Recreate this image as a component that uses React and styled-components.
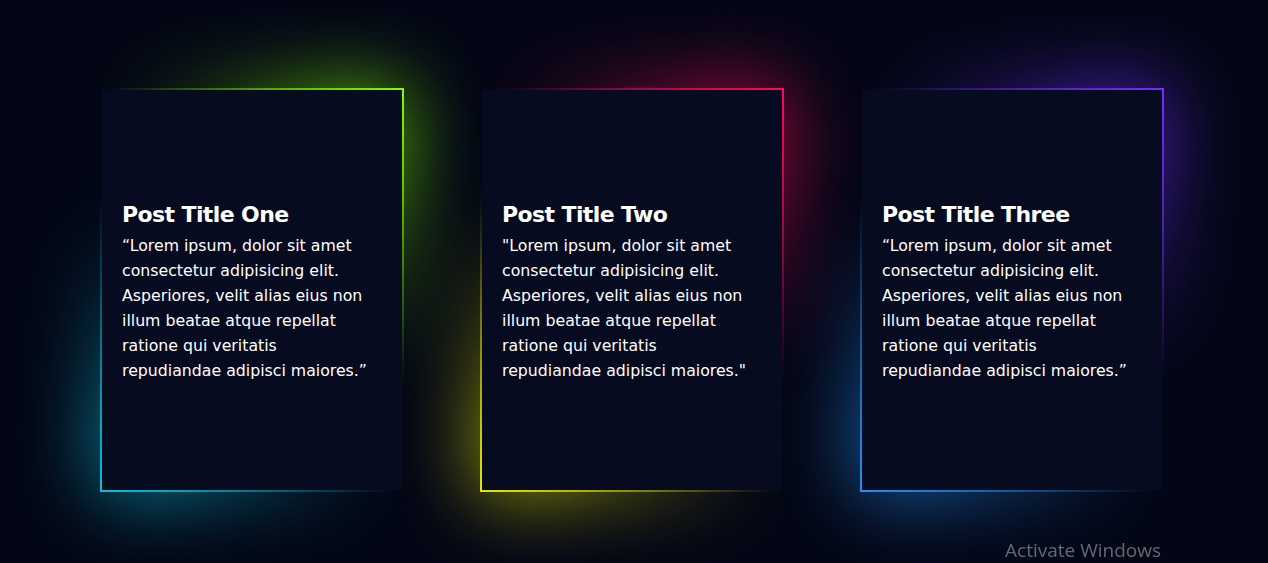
import React from "react";
import styled, { createGlobalStyle } from "styled-components";

const GlobalStyle = createGlobalStyle`
  * {
    box-sizing: border-box;
  }

  html,
  body {
    margin: 0;
    padding: 0;
    background: #030615;
    min-height: 100%;
    overflow: hidden;
  }
`;

const Page = styled.main`
  display: flex;
  justify-content: center;
  gap: 80px;
  padding: 90px 4px 0 0;
  min-height: 563px;
  background: #030615;
  font-family: "DejaVu Sans", "Open Sans", sans-serif;
`;

const Card = styled.div`
  position: relative;
  isolation: isolate;
  width: 300px;
  height: 400px;

  &::before,
  &::after {
    content: "";
    position: absolute;
    inset: -2px;
    background: linear-gradient(
      45deg,
      ${(p) => p.$from} 0%,
      transparent 42%,
      transparent 58%,
      ${(p) => p.$to} 100%
    );
  }

  &::before {
    z-index: -1;
  }

  &::after {
    z-index: -2;
    filter: blur(40px);
    opacity: 0.95;
  }
`;

const Panel = styled.div`
  display: flex;
  flex-direction: column;
  justify-content: center;
  height: 100%;
  padding: 2px 20px 0;
  background: #070b20;
  color: #fff;
`;

const Title = styled.h2`
  margin: 0 0 3px;
  font-size: 22px;
  font-weight: 700;
  line-height: 30px;
  letter-spacing: -0.6px;
`;

const Body = styled.p`
  margin: 0;
  font-size: 15.75px;
  font-weight: 400;
  line-height: 25px;
  white-space: pre-line;
`;

const Watermark = styled.div`
  position: fixed;
  right: 107px;
  bottom: 0;
  font-family: "Open Sans", "Noto Sans", sans-serif;
  font-size: 19px;
  color: rgba(200, 200, 200, 0.5);
`;

const text = (open, close) =>
  `${open}Lorem ipsum, dolor sit amet
consectetur adipisicing elit.
Asperiores, velit alias eius non
illum beatae atque repellat
ratione qui veritatis
repudiandae adipisci maiores.${close}`;

const posts = [
  { title: "Post Title One", from: "#0cc0d9", to: "#80ff00", open: "\u201C", close: "\u201D" },
  { title: "Post Title Two", from: "#e8e800", to: "#ff0a5a", open: '"', close: '"' },
  { title: "Post Title Three", from: "#2391f5", to: "#7030ff", open: "\u201C", close: "\u201D" },
];

export default function App() {
  return (
    <>
      <GlobalStyle />
      <Page>
        {posts.map((post) => (
          <Card key={post.title} $from={post.from} $to={post.to}>
            <Panel>
              <Title>{post.title}</Title>
              <Body>{text(post.open, post.close)}</Body>
            </Panel>
          </Card>
        ))}
      </Page>
      <Watermark>Activate Windows</Watermark>
    </>
  );
}
